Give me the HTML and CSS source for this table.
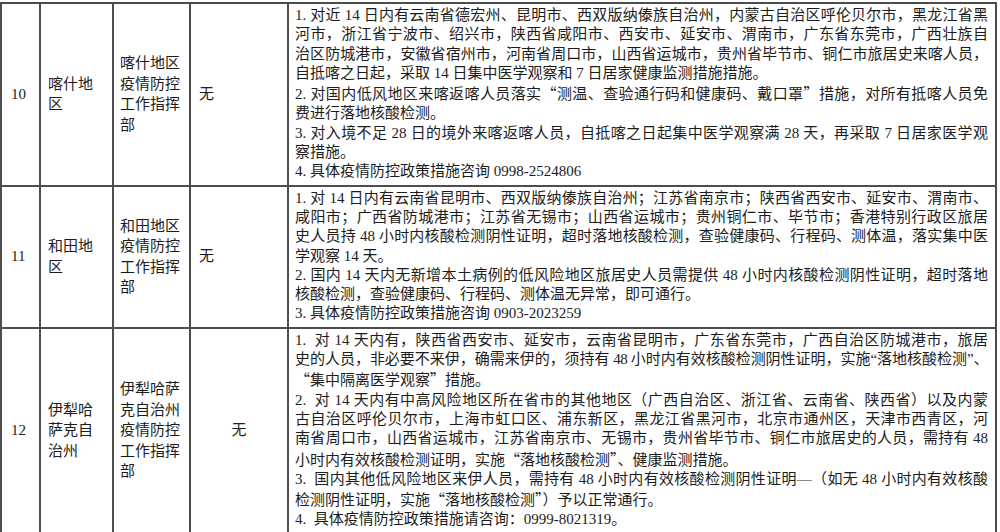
FILE: index.html
```html
<!DOCTYPE html>
<html lang="zh-CN">
<head>
<meta charset="utf-8">
<title>疫情防控政策</title>
<link rel="stylesheet" href="styles.css">
</head>
<body>
<table class="policy">
  <colgroup>
    <col class="c-num">
    <col class="c-area">
    <col class="c-dept">
    <col class="c-none">
    <col class="c-text">
  </colgroup>
  <tbody>
    <tr>
      <td class="num">10</td>
      <td class="area">喀什地区</td>
      <td class="dept">喀什地区疫情防控工作指挥部</td>
      <td class="none">无</td>
      <td class="text">
        <p class="para">
          <span class="ln">1. 对近 14 日内有云南省德宏州、昆明市、西双版纳傣族自治州，内蒙古自治区呼伦贝尔市，黑龙江省黑</span>
          <span class="ln">河市，浙江省宁波市、绍兴市，陕西省咸阳市、西安市、延安市、渭南市，广东省东莞市，广西壮族自</span>
          <span class="ln">治区防城港市，安徽省宿州市，河南省周口市，山西省运城市，贵州省毕节市、铜仁市旅居史来喀人员，</span>
          <span class="ln last">自抵喀之日起，采取 14 日集中医学观察和 7 日居家健康监测措施措施。</span>
        </p>
        <p class="para">
          <span class="ln">2. 对国内低风地区来喀返喀人员落实<span class="cjk">“</span>测温、查验通行码和健康码、戴口罩<span class="cjk">”</span>措施，对所有抵喀人员免</span>
          <span class="ln last">费进行落地核酸检测。</span>
        </p>
        <p class="para">
          <span class="ln">3. 对入境不足 28 日的境外来喀返喀人员，自抵喀之日起集中医学观察满 28 天，再采取 7 日居家医学观</span>
          <span class="ln last">察措施。</span>
        </p>
        <p class="para">
          <span class="ln last">4. 具体疫情防控政策措施咨询 0998-2524806</span>
        </p>
      </td>
    </tr>
    <tr>
      <td class="num">11</td>
      <td class="area">和田地区</td>
      <td class="dept">和田地区疫情防控工作指挥部</td>
      <td class="none">无</td>
      <td class="text">
        <p class="para">
          <span class="ln">1. 对 14 日内有云南省昆明市、西双版纳傣族自治州；江苏省南京市；陕西省西安市、延安市、渭南市、</span>
          <span class="ln">咸阳市；广西省防城港市；江苏省无锡市；山西省运城市；贵州铜仁市、毕节市；香港特别行政区旅居</span>
          <span class="ln">史人员持 48 小时内核酸检测阴性证明，超时落地核酸检测，查验健康码、行程码、测体温，落实集中医</span>
          <span class="ln last">学观察 14 天。</span>
        </p>
        <p class="para">
          <span class="ln">2. 国内 14 天内无新增本土病例的低风险地区旅居史人员需提供 48 小时内核酸检测阴性证明，超时落地</span>
          <span class="ln last">核酸检测，查验健康码、行程码、测体温无异常，即可通行。</span>
        </p>
        <p class="para">
          <span class="ln last">3. 具体疫情防控政策措施咨询 0903-2023259</span>
        </p>
      </td>
    </tr>
    <tr>
      <td class="num">12</td>
      <td class="area">伊犁哈萨克自治州</td>
      <td class="dept">伊犁哈萨克自治州疫情防控工作指挥部</td>
      <td class="none center">无</td>
      <td class="text">
        <p class="para">
          <span class="ln">1.&nbsp; 对 14 天内有，陕西省西安市、延安市，云南省昆明市，广东省东莞市，广西自治区防城港市，旅居</span>
          <span class="ln tight">史的人员，非必要不来伊，确需来伊的，须持有 48 小时内有效核酸检测阴性证明，实施“落地核酸检测”、</span>
          <span class="ln last"><span class="cjk">“</span>集中隔离医学观察<span class="cjk">”</span>措施。</span>
        </p>
        <p class="para">
          <span class="ln">2.&nbsp; 对 14 天内有中高风险地区所在省市的其他地区（广西自治区、浙江省、云南省、陕西省）以及内蒙</span>
          <span class="ln">古自治区呼伦贝尔市，上海市虹口区、浦东新区，黑龙江省黑河市，北京市通州区，天津市西青区，河</span>
          <span class="ln">南省周口市，山西省运城市，江苏省南京市、无锡市，贵州省毕节市、铜仁市旅居史的人员，需持有 48</span>
          <span class="ln last">小时内有效核酸检测证明，实施<span class="cjk">“</span>落地核酸检测<span class="cjk">”</span>、健康监测措施。</span>
        </p>
        <p class="para">
          <span class="ln">3.&nbsp; 国内其他低风险地区来伊人员，需持有 48 小时内有效核酸检测阴性证明—（如无 48 小时内有效核酸</span>
          <span class="ln last">检测阴性证明，实施<span class="cjk">“</span>落地核酸检测<span class="cjk">”</span>）予以正常通行。</span>
        </p>
        <p class="para">
          <span class="ln last">4.&nbsp; 具体疫情防控政策措施请咨询：0999-8021319。</span>
        </p>
      </td>
    </tr>
  </tbody>
</table>
</body>
</html>
```

FILE: styles.css
```css
html, body {
  margin: 0;
  padding: 0;
  background: #ffffff;
}

body {
  padding-top: 2px;
  font-family: "Liberation Serif", "Noto Sans CJK SC", serif;
  font-size: 15px;
  color: #1c1c1c;
}

.policy {
  width: 995px;
  border-collapse: collapse;
  table-layout: fixed;
}

.c-num { width: 39px; }
.c-area { width: 73px; }
.c-dept { width: 77px; }
.c-none { width: 98px; }
.c-text { width: 708px; }

.policy td {
  border: 2px solid #4d4d4d;
  vertical-align: middle;
  line-height: 19.3px;
}

.num {
  padding: 0 4px 0 9px;
}

.area {
  padding: 0 6px 0 7px;
  line-height: 20px;
}

.policy .area,
.policy .dept {
  line-height: 20.5px;
}

.dept {
  padding: 0 4px 0 6px;
}

.none {
  padding: 0 6px 0 8px;
}

.none.center {
  text-align: center;
  padding: 0;
}

.text {
  padding: 2px 7px 3px 6px;
}

.para {
  margin: 0;
}

.ln {
  display: block;
  text-align: justify;
  text-align-last: justify;
}

.ln.last {
  text-align-last: left;
}

.ln.tight {
  letter-spacing: -0.6px;
}

.cjk {
  font-family: "Noto Sans CJK SC", sans-serif;
}
```
